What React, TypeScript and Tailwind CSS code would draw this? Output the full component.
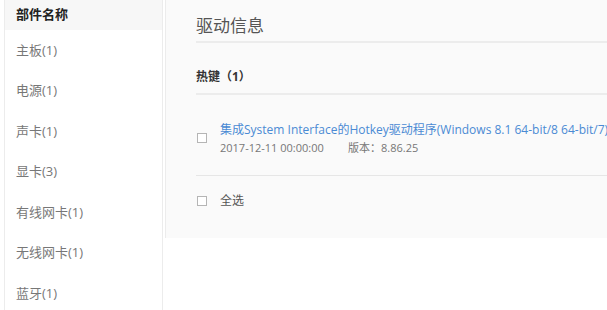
import React from "react";

const PARTS = [
  "主板(1)",
  "电源(1)",
  "声卡(1)",
  "显卡(3)",
  "有线网卡(1)",
  "无线网卡(1)",
  "蓝牙(1)",
];

function Box() {
  return (
    <span className="block h-[10px] w-[10px] shrink-0 border border-[#b5b5b5] bg-white" />
  );
}

export default function App() {
  return (
    <div
      className="flex h-[310px] w-[607px] overflow-hidden bg-white"
      style={{ fontFamily: '"Open Sans", "Noto Sans CJK SC", sans-serif' }}
    >
      <aside className="ml-[4px] w-[159px] shrink-0 border-x border-[#ececec]">
        <div className="flex h-[30px] items-center bg-[#f7f7f7] pl-[11px] text-[13px] font-bold text-[#222]">
          部件名称
        </div>
        <ul>
          {PARTS.map((p) => (
            <li
              key={p}
              className="flex h-[40.5px] items-center pl-[11px] text-[13px] text-[#777]"
            >
              {p}
            </li>
          ))}
        </ul>
      </aside>

      <main className="ml-[2px] h-[238px] flex-1 self-start border-l border-[#ececec] bg-[#fafafa] pl-[30px]">
        <h2 className="flex h-[43px] items-end border-b-2 border-[#ececec] pb-[3px] text-[17px] leading-[24px] text-[#555]">
          驱动信息
        </h2>
        <div className="h-[52px] border-b-2 border-[#ececec] pt-[26px] text-[12px] font-bold leading-[16px] text-[#333]">
          热键（1）
        </div>
        <div className="flex h-[81px] items-start gap-[13px] border-b border-[#e6e6e6] pl-[1px] pt-[26px]">
          <span className="mt-[12px]">
            <Box />
          </span>
          <div className="min-w-0">
            <div className="whitespace-nowrap text-[12px] leading-[18px] text-[#4a8ad4]">
              集成System Interface的Hotkey驱动程序(Windows 8.1 64-bit/8 64-bit/7)
            </div>
            <div className="mt-[1px] flex whitespace-nowrap text-[11px] text-[#777]">
              <span className="w-[128px]">2017-12-11 00:00:00</span>
              <span>版本：8.86.25</span>
            </div>
          </div>
        </div>
        <div className="flex h-[50px] items-center gap-[13px] pl-[1px]">
          <Box />
          <span className="text-[12px] text-[#555]">全选</span>
        </div>
      </main>
    </div>
  );
}
